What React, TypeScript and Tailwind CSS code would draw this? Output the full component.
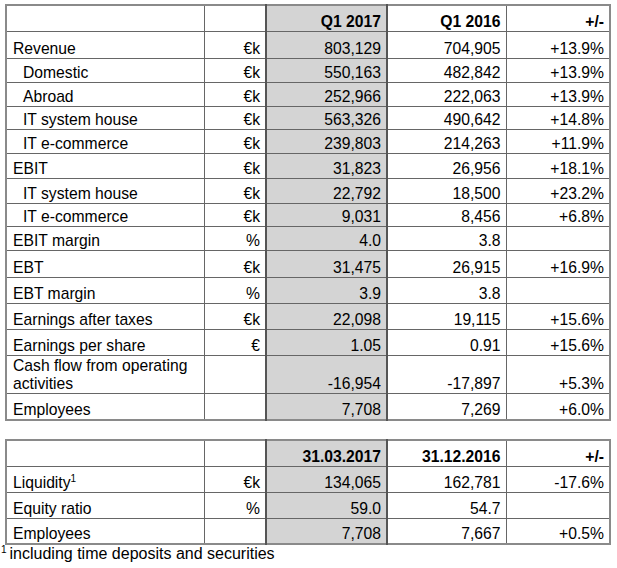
import React from 'react';

type Row = {
  label: React.ReactNode;
  indent?: boolean;
  unit: string;
  a: string;
  b: string;
  c: string;
  h: string;
  strong?: boolean;
};

const quarterRows: Row[] = [
  { label: 'Revenue', unit: '€k', a: '803,129', b: '704,905', c: '+13.9%', h: 'h-[27px]' },
  { label: 'Domestic', indent: true, unit: '€k', a: '550,163', b: '482,842', c: '+13.9%', h: 'h-[24px]' },
  { label: 'Abroad', indent: true, unit: '€k', a: '252,966', b: '222,063', c: '+13.9%', h: 'h-[24px]' },
  { label: 'IT system house', indent: true, unit: '€k', a: '563,326', b: '490,642', c: '+14.8%', h: 'h-[23px]' },
  { label: 'IT e-commerce', indent: true, unit: '€k', a: '239,803', b: '214,263', c: '+11.9%', h: 'h-[24px]' },
  { label: 'EBIT', unit: '€k', a: '31,823', b: '26,956', c: '+18.1%', h: 'h-[25px]' },
  { label: 'IT system house', indent: true, unit: '€k', a: '22,792', b: '18,500', c: '+23.2%', h: 'h-[25px]' },
  { label: 'IT e-commerce', indent: true, unit: '€k', a: '9,031', b: '8,456', c: '+6.8%', h: 'h-[23px]' },
  { label: 'EBIT margin', unit: '%', a: '4.0', b: '3.8', c: '', h: 'h-[24px]' },
  { label: 'EBT', unit: '€k', a: '31,475', b: '26,915', c: '+16.9%', h: 'h-[27px]' },
  { label: 'EBT margin', unit: '%', a: '3.9', b: '3.8', c: '', h: 'h-[26px]' },
  { label: 'Earnings after taxes', unit: '€k', a: '22,098', b: '19,115', c: '+15.6%', h: 'h-[26px]' },
  { label: 'Earnings per share', unit: '€', a: '1.05', b: '0.91', c: '+15.6%', h: 'h-[26px]' },
  {
    label: (
      <>
        Cash flow from operating
        <br />
        activities
      </>
    ),
    unit: '',
    a: '-16,954',
    b: '-17,897',
    c: '+5.3%',
    h: 'h-[38px]',
  },
  { label: 'Employees', unit: '', a: '7,708', b: '7,269', c: '+6.0%', h: 'h-[27px]', strong: true },
];

const balanceRows: Row[] = [
  {
    label: (
      <>
        Liquidity<sup className="text-[10px] -top-[6px]">1</sup>
      </>
    ),
    unit: '€k',
    a: '134,065',
    b: '162,781',
    c: '-17.6%',
    h: 'h-[26px]',
  },
  { label: 'Equity ratio', unit: '%', a: '59.0', b: '54.7', c: '', h: 'h-[26px]' },
  { label: 'Employees', unit: '', a: '7,708', b: '7,667', c: '+0.5%', h: 'h-[26px]' },
];

const cell = 'border border-[#666] align-bottom p-0 leading-[18px]';

const KeyTable = ({ head, rows }: { head: string[]; rows: Row[] }) => (
  <table className="table-fixed border-collapse border-2 border-[#8a8a8a] w-[604px]">
    <colgroup>
      <col className="w-[198px]" />
      <col className="w-[62px]" />
      <col className="w-[121px]" />
      <col className="w-[119px]" />
      <col className="w-[104px]" />
    </colgroup>
    <tbody>
      <tr className="h-[26px]">
        <td className={cell} />
        <td className={`${cell} border-r-2 border-r-[#555]`} />
        <td className={`${cell} bg-[#d4d4d4] font-bold text-right pr-[5px] border-r-2 border-r-[#555]`}>{head[0]}</td>
        <td className={`${cell} font-bold text-right pr-[5px]`}>{head[1]}</td>
        <td className={`${cell} font-bold text-right pr-[5px]`}>{head[2]}</td>
      </tr>
      {rows.map((r, i) => (
        <tr key={i} className={r.h}>
          <td className={`${cell} ${r.indent ? 'pl-[16px]' : 'pl-[6px]'} ${r.strong ? 'border-t-black' : ''}`}>{r.label}</td>
          <td className={`${cell} text-right pr-[5px] border-r-2 border-r-[#555] ${r.strong ? 'border-t-black' : ''}`}>{r.unit}</td>
          <td className={`${cell} bg-[#d4d4d4] text-right pr-[5px] border-r-2 border-r-[#555] ${r.strong ? 'border-t-black' : ''}`}>{r.a}</td>
          <td className={`${cell} text-right pr-[5px] ${r.strong ? 'border-t-black' : ''}`}>{r.b}</td>
          <td className={`${cell} text-right pr-[5px] ${r.strong ? 'border-t-black' : ''}`}>{r.c}</td>
        </tr>
      ))}
    </tbody>
  </table>
);

export default function App() {
  return (
    <div className="w-[617px] h-[568px] bg-white text-black text-[15.7px] pt-[4px] pl-[5px] font-['Liberation_Sans',Arial,sans-serif]">
      <KeyTable head={['Q1 2017', 'Q1 2016', '+/-']} rows={quarterRows} />
      <div className="h-[18px]" />
      <KeyTable head={['31.03.2017', '31.12.2016', '+/-']} rows={balanceRows} />
      <p className="-ml-[5px] text-[16px] leading-[18px]">
        <sup className="text-[10px] -top-[6px] mr-[3px] ml-[1px]">1</sup>including time deposits and securities
      </p>
    </div>
  );
}
